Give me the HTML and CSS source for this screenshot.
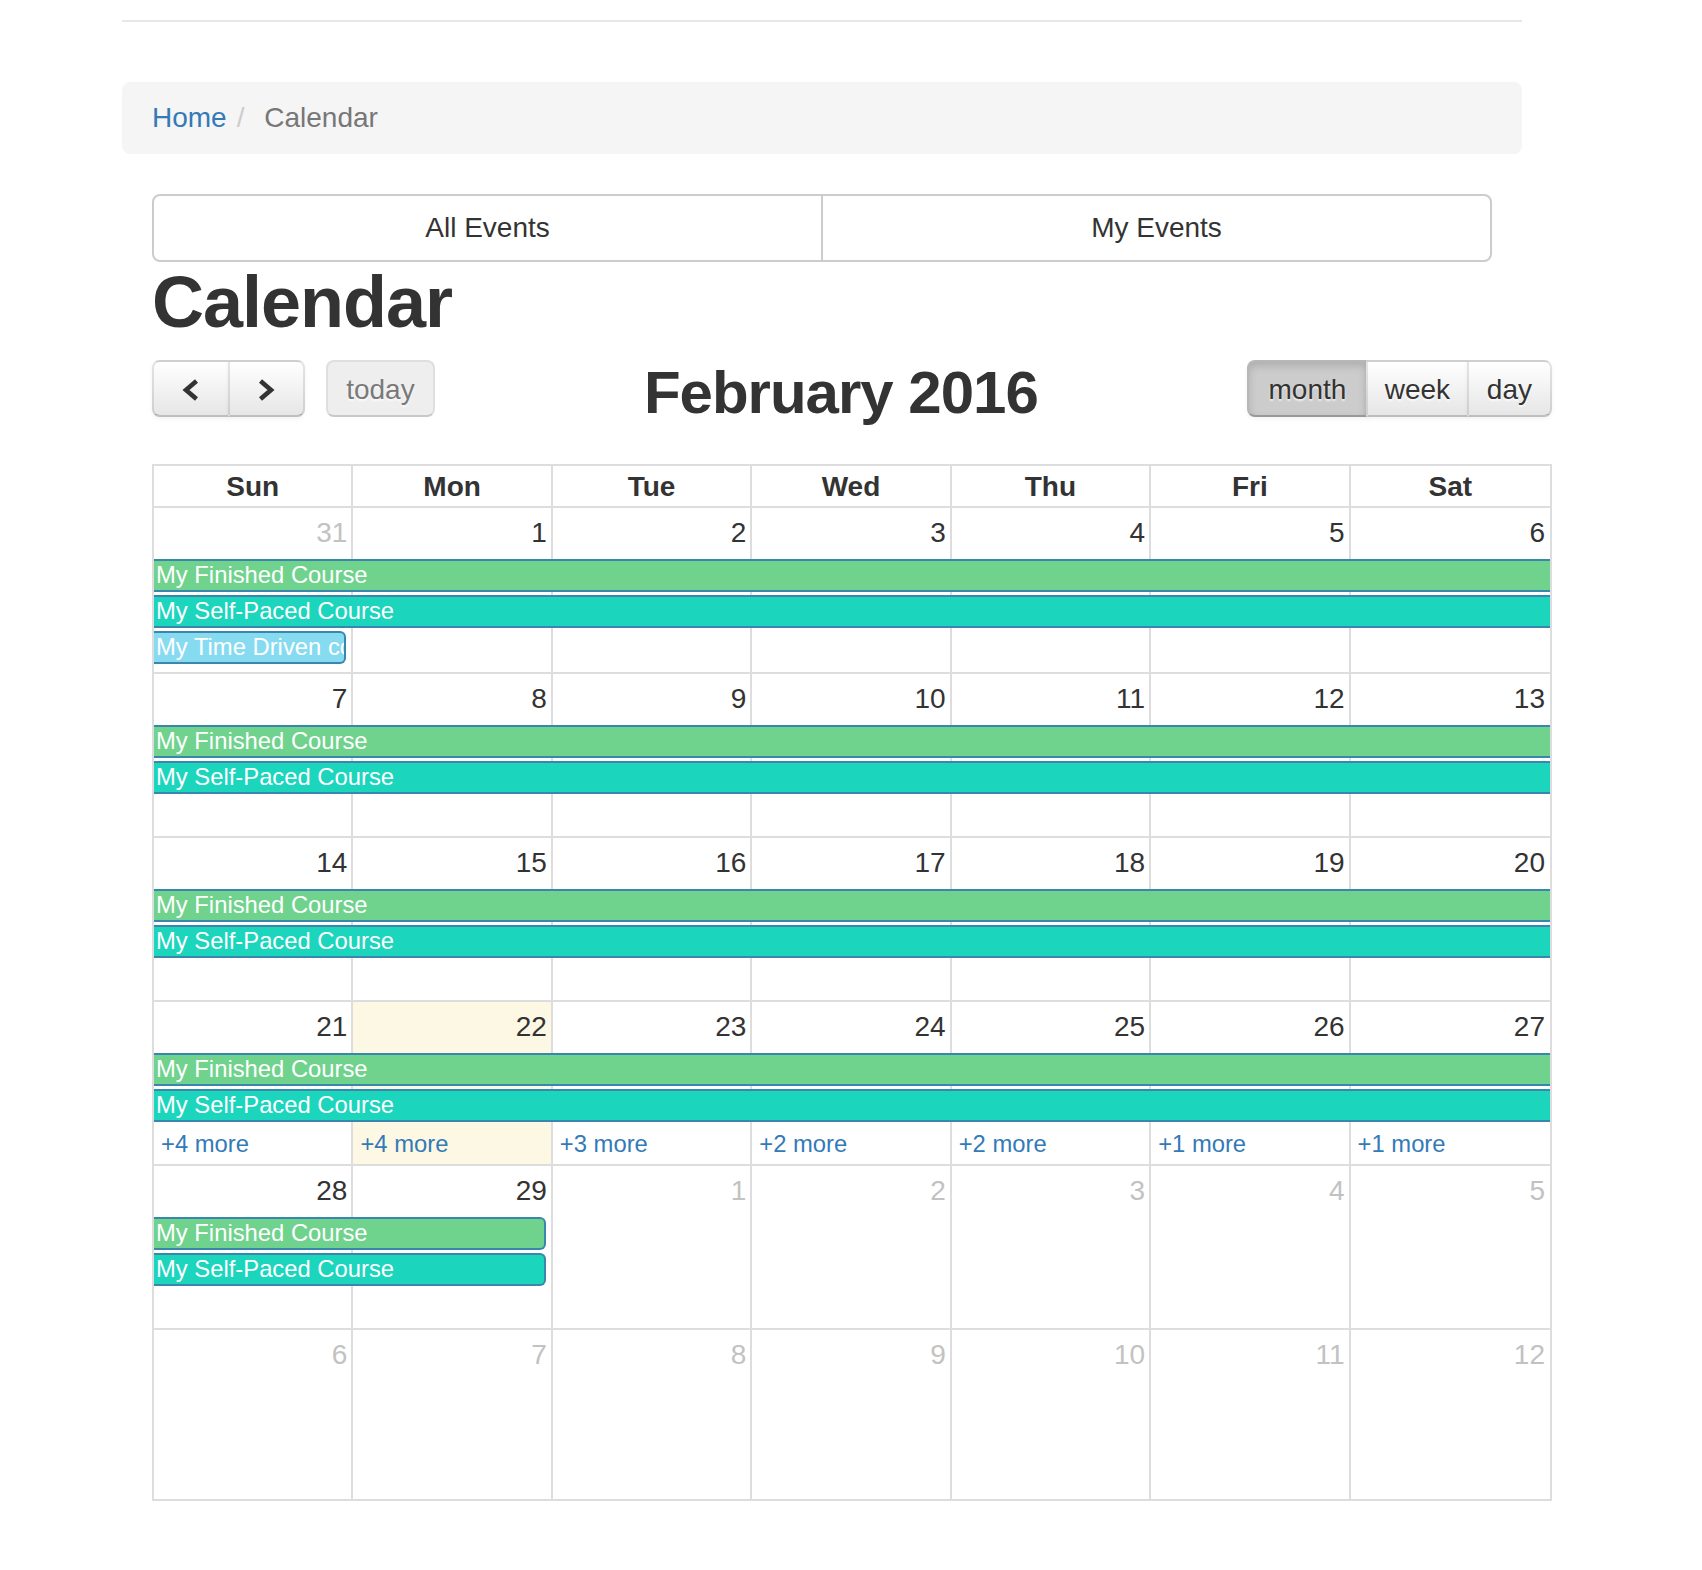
FILE: index.html
```html
<!DOCTYPE html>
<html lang="en">
<head>
<meta charset="utf-8">
<title>Calendar</title>
<link rel="stylesheet" href="styles.css">
</head>
<body>
<div class="page">
  <div class="rule"></div>
  <div class="breadcrumb"><a href="#">Home</a><span class="sep">/&nbsp;</span><span class="crumb-current">Calendar</span></div>
  <div class="content">
    <div class="tabs">
      <div class="tab tab-first">All Events</div>
      <div class="tab tab-last">My Events</div>
    </div>
    <h1 class="title">Calendar</h1>
    <div class="calendar">
      <div class="toolbar">
        <div class="tb-left">
          <div class="group">
            <button class="btn btn-first" type="button"><svg class="chev" viewBox="0 0 20 24" width="20" height="24"><polyline points="15.5,3 5,12 15.5,21" fill="none" stroke="#333" stroke-width="4.6"/></svg></button>
            <button class="btn btn-last" type="button"><svg class="chev" viewBox="0 0 20 24" width="20" height="24"><polyline points="4.5,3 15,12 4.5,21" fill="none" stroke="#333" stroke-width="4.6"/></svg></button>
          </div>
          <button class="btn btn-single btn-disabled btn-today" type="button">today</button>
        </div>
        <div class="tb-center"><h2 class="month-title">February 2016</h2></div>
        <div class="tb-right">
          <div class="group">
            <button class="btn btn-first btn-active btn-month" type="button">month</button>
            <button class="btn" type="button">week</button>
            <button class="btn btn-last btn-day" type="button">day</button>
          </div>
        </div>
      </div>

      <div class="cal-head">
        <div class="hd">Sun</div><div class="hd">Mon</div><div class="hd">Tue</div><div class="hd">Wed</div><div class="hd">Thu</div><div class="hd">Fri</div><div class="hd hd-last">Sat</div>
      </div>

      <!-- week 1 -->
      <div class="week week-1">
        <div class="bg c1"></div><div class="bg c2"></div><div class="bg c3"></div><div class="bg c4"></div><div class="bg c5"></div><div class="bg c6"></div><div class="bg c7 bg-last"></div>
        <div class="num c1 other">31</div><div class="num c2">1</div><div class="num c3">2</div><div class="num c4">3</div><div class="num c5">4</div><div class="num c6">5</div><div class="num c7 num-last">6</div>
        <div class="ev fin r2 span-all">My Finished Course</div>
        <div class="ev self r3 span-all">My Self-Paced Course</div>
        <div class="ev time r4 span-1 end">My Time Driven course</div>
      </div>

      <!-- week 2 -->
      <div class="week">
        <div class="bg c1"></div><div class="bg c2"></div><div class="bg c3"></div><div class="bg c4"></div><div class="bg c5"></div><div class="bg c6"></div><div class="bg c7 bg-last"></div>
        <div class="num c1">7</div><div class="num c2">8</div><div class="num c3">9</div><div class="num c4">10</div><div class="num c5">11</div><div class="num c6">12</div><div class="num c7 num-last">13</div>
        <div class="ev fin r2 span-all">My Finished Course</div>
        <div class="ev self r3 span-all">My Self-Paced Course</div>
      </div>

      <!-- week 3 -->
      <div class="week">
        <div class="bg c1"></div><div class="bg c2"></div><div class="bg c3"></div><div class="bg c4"></div><div class="bg c5"></div><div class="bg c6"></div><div class="bg c7 bg-last"></div>
        <div class="num c1">14</div><div class="num c2">15</div><div class="num c3">16</div><div class="num c4">17</div><div class="num c5">18</div><div class="num c6">19</div><div class="num c7 num-last">20</div>
        <div class="ev fin r2 span-all">My Finished Course</div>
        <div class="ev self r3 span-all">My Self-Paced Course</div>
      </div>

      <!-- week 4 -->
      <div class="week">
        <div class="bg c1"></div><div class="bg c2 today"></div><div class="bg c3"></div><div class="bg c4"></div><div class="bg c5"></div><div class="bg c6"></div><div class="bg c7 bg-last"></div>
        <div class="num c1">21</div><div class="num c2">22</div><div class="num c3">23</div><div class="num c4">24</div><div class="num c5">25</div><div class="num c6">26</div><div class="num c7 num-last">27</div>
        <div class="ev fin r2 span-all">My Finished Course</div>
        <div class="ev self r3 span-all">My Self-Paced Course</div>
        <a class="more r4 c1" href="#">+4 more</a>
        <a class="more r4 c2" href="#">+4 more</a>
        <a class="more r4 c3" href="#">+3 more</a>
        <a class="more r4 c4" href="#">+2 more</a>
        <a class="more r4 c5" href="#">+2 more</a>
        <a class="more r4 c6" href="#">+1 more</a>
        <a class="more r4 c7" href="#">+1 more</a>
      </div>

      <!-- week 5 -->
      <div class="week">
        <div class="bg c1"></div><div class="bg c2"></div><div class="bg c3"></div><div class="bg c4"></div><div class="bg c5"></div><div class="bg c6"></div><div class="bg c7 bg-last"></div>
        <div class="num c1">28</div><div class="num c2">29</div><div class="num c3 other">1</div><div class="num c4 other">2</div><div class="num c5 other">3</div><div class="num c6 other">4</div><div class="num c7 num-last other">5</div>
        <div class="ev fin r2 span-2 end">My Finished Course</div>
        <div class="ev self r3 span-2 end">My Self-Paced Course</div>
      </div>

      <!-- week 6 -->
      <div class="week week-6">
        <div class="bg c1"></div><div class="bg c2"></div><div class="bg c3"></div><div class="bg c4"></div><div class="bg c5"></div><div class="bg c6"></div><div class="bg c7 bg-last"></div>
        <div class="num c1 other">6</div><div class="num c2 other">7</div><div class="num c3 other">8</div><div class="num c4 other">9</div><div class="num c5 other">10</div><div class="num c6 other">11</div><div class="num c7 num-last other">12</div>
      </div>
    </div>
  </div>
</div>
</body>
</html>
```
FILE: styles.css
```css
* { box-sizing: border-box; }
html, body { margin: 0; padding: 0; background: #fff; }
body {
  font-family: "Liberation Sans", Arial, Helvetica, sans-serif;
  font-size: 28px;
  line-height: 40px;
  color: #333;
}
.page { width: 1400px; margin-left: 122px; padding-top: 20px; }
.rule { height: 0; border-top: 2px solid #e8e8e8; }

.breadcrumb {
  margin-top: 59.7px;
  height: 72px;
  padding: 16px 30px;
  background: #f5f5f5;
  border-radius: 8px;
  display: flex;
  white-space: nowrap;
}
.breadcrumb a { color: #337ab7; text-decoration: none; }
.sep { color: #ccc; padding: 0 10px; }
.crumb-current { color: #777; padding-left: 2px; }

.content { padding: 0 30px; }

.tabs { display: flex; margin-top: 40.6px; }
.tab {
  flex: 1;
  padding: 12px 24px 12px;
  border: 2px solid #ccc;
  background: #fff;
  text-align: center;
  color: #333;
}
.tab-first { border-radius: 8px 0 0 8px; }
.tab-last { border-radius: 0 8px 8px 0; margin-left: -2px; }

.title {
  margin: 1px 0 0;
  font-size: 72px;
  line-height: 79.2px;
  font-weight: bold;
  letter-spacing: -1px;
  color: #333;
}

.calendar { width: 1400px; }

.toolbar {
  display: flex;
  align-items: flex-start;
  margin-top: 17.8px;
  margin-bottom: 37.5px;
}
.tb-left { display: flex; gap: 21px; }
.tb-center { flex: 1; text-align: center; }
.tb-right { display: flex; }
.month-title {
  margin: 0;
  font-size: 60px;
  line-height: 66px;
  font-weight: bold;
  letter-spacing: -1px;
  color: #333;
}
.group { display: flex; }

.btn {
  height: 57px;
  margin: 0;
  padding: 2px 16.8px 0;
  border: 2px solid;
  border-color: rgba(0,0,0,.1) rgba(0,0,0,.1) rgba(0,0,0,.25);
  border-radius: 0;
  background-color: #f5f5f5;
  background-image: linear-gradient(to bottom, #fff, #e6e6e6);
  box-shadow: inset 0 2px 0 rgba(255,255,255,.2), 0 2px 4px rgba(0,0,0,.05);
  font-family: "Liberation Sans", Arial, Helvetica, sans-serif;
  font-size: 28px;
  line-height: 51px;
  color: #333;
  text-shadow: 0 2px 2px rgba(255,255,255,.75);
  display: flex;
  align-items: center;
  justify-content: center;
}
.group .btn + .btn { margin-left: -2px; }
.btn-first { border-radius: 8px 0 0 8px; }
.btn-last { border-radius: 0 8px 8px 0; }
.btn-single { border-radius: 8px; }
.btn-today { padding-left: 18px; padding-right: 18px; }
.btn-month { padding-left: 19.5px; padding-right: 19.5px; }
.btn-day { padding-left: 18px; padding-right: 18px; }
.chev { display: block; width: 40px; height: 24px; }
.btn-disabled {
  background-color: #e6e6e6;
  background-image: none;
  box-shadow: none;
  opacity: .65;
}
.btn-active {
  background-color: #ccc;
  background-image: none;
  box-shadow: inset 0 4px 8px rgba(0,0,0,.15), 0 2px 4px rgba(0,0,0,.05);
}

.cal-head {
  display: grid;
  grid-template-columns: repeat(7, 1fr);
  border: 2px solid #ddd;
}
.hd {
  text-align: center;
  font-weight: bold;
  line-height: 40px;
  padding-top: 1px;
  margin-bottom: -1px;
  border-right: 2px solid #ddd;
}
.hd-last { border-right: 0; }

.week {
  display: grid;
  grid-template-columns: repeat(7, 1fr);
  grid-template-rows: 48px 36px 36px auto 1fr;
  height: 164px;
  border-left: 2px solid #ddd;
  border-right: 2px solid #ddd;
  border-bottom: 2px solid #ddd;
}
.week-1 { height: 166.2px; }
.week-6 { height: 171.3px; }

.bg { grid-row: 1 / -1; border-right: 2px solid #ddd; }
.bg-last { border-right: 0; }
.today { background: #fcf8e3; }

.c1 { grid-column: 1; }
.c2 { grid-column: 2; }
.c3 { grid-column: 3; }
.c4 { grid-column: 4; }
.c5 { grid-column: 5; }
.c6 { grid-column: 6; }
.c7 { grid-column: 7; }

.num {
  grid-row: 1;
  text-align: right;
  padding: 5px 6px 3px 0;
  line-height: 40px;
  color: #333;
}
.num-last { padding-right: 5px; }
.num.other { color: #c2c2c2; }

.r2 { grid-row: 2; }
.r3 { grid-row: 3; }
.r4 { grid-row: 4; }
.span-all { grid-column: 1 / 8; }
.span-2 { grid-column: 1 / 3; }
.span-1 { grid-column: 1 / 2; }

.ev {
  height: 33px;
  margin-top: 3px;
  padding: 0 2px 2px;
  border-top: 2px solid #3a87ad;
  border-bottom: 2px solid #3a87ad;
  color: #fff;
  font-size: 23.8px;
  line-height: 27px;
  white-space: nowrap;
  overflow: hidden;
}
.ev.end {
  margin-right: 7px;
  border-right: 2px solid #3a87ad;
  border-radius: 0 6px 6px 0;
}
.fin { background: #6fd28d; }
.self { background: #1bd5bd; }
.time { background: #86dbf0; }

.more {
  padding: 5px 0 0 7px;
  font-size: 23.8px;
  line-height: 34px;
  color: #337ab7;
  text-decoration: none;
}
```
